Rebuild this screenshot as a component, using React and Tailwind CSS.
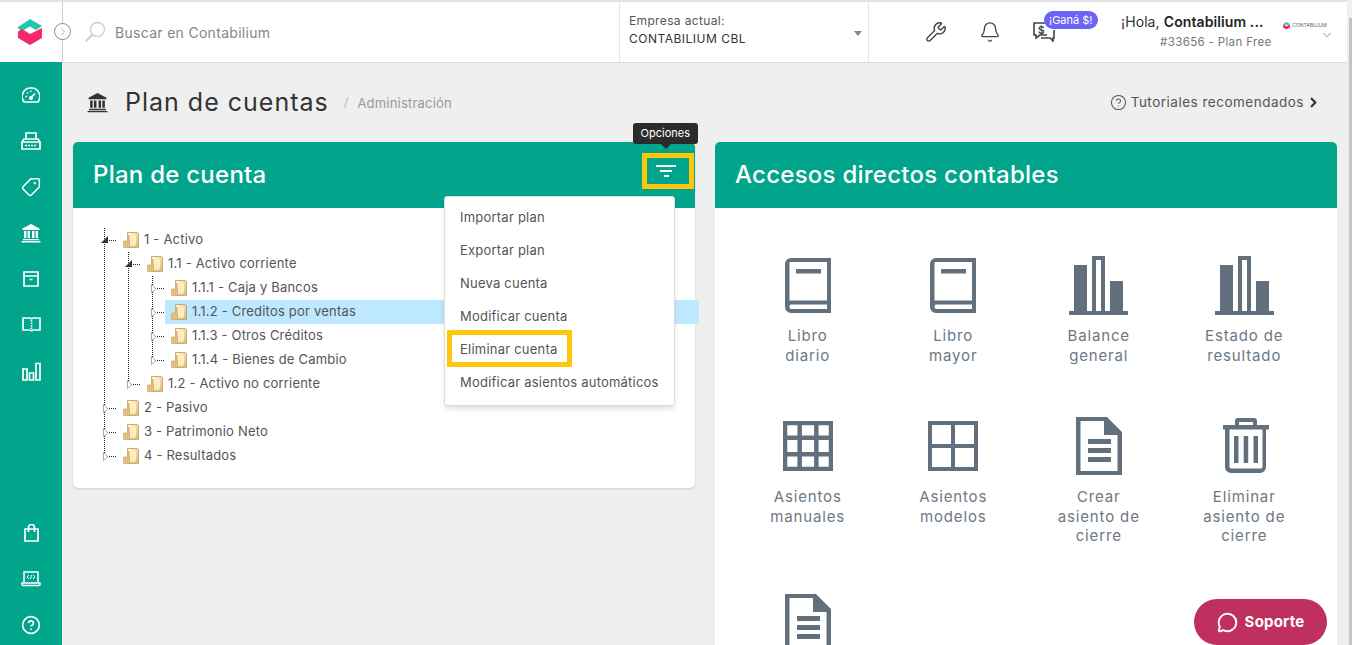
import { CircleHelp, ChevronRight, ChevronDown, Wrench, Bell, Tag, MessageCircle } from "lucide-react";

const font = { fontFamily: 'Inter, "Noto Sans", sans-serif' };

const rows = [
  { label: "1 - Activo", depth: 0, open: true, guides: [[0, "full"]] },
  { label: "1.1 - Activo corriente", depth: 1, open: true, guides: [[0, "full"], [1, "full"]] },
  { label: "1.1.1 - Caja y Bancos", depth: 2, guides: [[0, "full"], [1, "full"], [2, "full"]] },
  { label: "1.1.2 - Creditos por ventas", depth: 2, selected: true, guides: [[0, "full"], [1, "full"], [2, "full"]] },
  { label: "1.1.3 - Otros Créditos", depth: 2, guides: [[0, "full"], [1, "full"], [2, "full"]] },
  { label: "1.1.4 - Bienes de Cambio", depth: 2, guides: [[0, "full"], [1, "full"], [2, "top"]] },
  { label: "1.2 - Activo no corriente", depth: 1, guides: [[0, "full"], [1, "top"]] },
  { label: "2 - Pasivo", depth: 0, guides: [[0, "full"]] },
  { label: "3 - Patrimonio Neto", depth: 0, guides: [[0, "full"]] },
  { label: "4 - Resultados", depth: 0, guides: [[0, "top"]] },
];

const menuItems = ["Importar plan", "Exportar plan", "Nueva cuenta", "Modificar cuenta", "Eliminar cuenta", "Modificar asientos automáticos"];

function Logo({ size = 24 }) {
  return (
    <svg width={size} height={size * 1.08} viewBox="0 0 24 26">
      <path d="M0 8 12 0l12 7-6 4-6-3.500L4 12 0 9.500z" fill="#1fc9a9" />
      <path d="M0 12.500 4 10l8 5 12-6v10l-12 7-12-7z" fill="#f5286e" />
    </svg>
  );
}

function Folder() {
  return (
    <svg width="16" height="16" viewBox="0 0 16 16" className="shrink-0">
      <defs>
        <linearGradient id="folderFill" x1="0" y1="0" x2="1" y2="1">
          <stop offset="0" stopColor="#fff8dc" />
          <stop offset="1" stopColor="#e0b86f" />
        </linearGradient>
      </defs>
      <path d="M4.500.5h9.500l1.500 1v14H4.500z" fill="url(#folderFill)" stroke="#c29a58" strokeWidth="0.8" />
      <path d="M7 2.500h6v11H7z" fill="#fbeec4" />
      <path d="M.5 9h6v6.500h-6z" fill="#e3c07c" stroke="#c9a566" strokeWidth="0.6" />
      <path d="M4.500 3h2v6h-2z" fill="#d9b36d" />
    </svg>
  );
}

function Connector({ depth, open, guides }) {
  const w = 25 + depth * 24;
  const x = 12 + depth * 24;
  return (
    <svg width={w} height="24" className="shrink-0 block">
      {guides.map(([col, kind]) => (
        <line key={col} x1={12.5 + col * 24} x2={12.5 + col * 24} y1="0" y2={kind === "full" ? 24 : 12} stroke="#222" strokeDasharray="1 1" />
      ))}
      <line x1={x + 3} x2={w} y1="12.5" y2="12.5" stroke="#222" strokeDasharray="1 1" />
      {open ? (
        <path d={`M${x - 3} 15h7v-7z`} fill="#333" />
      ) : (
        <path d={`M${x - 0.5} 8.5l4.5 4-4.5 4z`} fill="#fff" stroke="#aaa" />
      )}
    </svg>
  );
}

function TreeRow({ row }) {
  return (
    <div className="flex h-6 items-center">
      <Connector depth={row.depth} open={row.open} guides={row.guides} />
      <div className={`flex h-6 flex-1 items-center gap-[5px] pl-[6px] text-[13px] tracking-[0.2px] text-[#555] ${row.selected ? "bg-[#bde8ff] text-[#444]" : ""}`}>
        <Folder />
        <span>{row.label}</span>
      </div>
    </div>
  );
}

const stroke = { fill: "none", stroke: "#fff", strokeWidth: 2 };

function SideIcon({ children }) {
  return (
    <div className="flex h-[46px] items-center justify-center text-white">{children}</div>
  );
}

function GaugeIcon() {
  return (
    <svg width="18" height="16" viewBox="0 0 18 16" {...stroke} strokeWidth="1.700">
      <path d="M3.500 15H2.200A8.500 8.500 0 0 1 9 1a8.500 8.500 0 0 1 6.800 14H3.500" />
      <path d="M9 10.500 13 6.500" />
      <circle cx="9" cy="11" r="1.200" fill="#fff" />
      <path d="M3.500 9.500h1.500M9 3.500V5M5.200 5.500l1 1" strokeWidth="1.300" />
    </svg>
  );
}

function Register() {
  return (
    <svg width="20" height="18" viewBox="0 0 20 18" {...stroke} strokeWidth="1.700">
      <path d="M1 10h18v7H1zM1 10l2-3h14l2 3M5 7V1h10v6" />
      <path d="M4 13.500h12" strokeDasharray="2 1" />
    </svg>
  );
}

function Bank({ color = "#fff", size = 20 }) {
  return (
    <svg width={size} height={size} viewBox="0 0 20 20" fill={color}>
      <path d="M10 1 18.500 5.500V7h-17V5.500z" />
      <path d="M3 8h2.400v7H3zM6.600 8H9v7H6.600zM11 8h2.400v7H11zM14.600 8H17v7h-2.400z" />
      <path d="M2 16h16v1.300H2zM.5 18h19v1.400H.5z" />
    </svg>
  );
}

function BoxIcon() {
  return (
    <svg width="16" height="16" viewBox="0 0 16 16" {...stroke} strokeWidth="1.700">
      <path d="M1 1h14v14H1zM1 5h14M6.500 8.500h3" />
    </svg>
  );
}

function OpenBook() {
  return (
    <svg width="19" height="16" viewBox="0 0 19 16" {...stroke} strokeWidth="1.700">
      <path d="M1 1h6.500c1 0 2 .5 2 1.500C9.500 1.500 10.500 1 11.500 1H18v12h-6.500c-1 0-2 .5-2 1.500 0-1-1-1.500-2-1.500H1z" />
      <path d="M9.500 3v10" strokeDasharray="1.500 1" />
    </svg>
  );
}

function BagIcon() {
  return (
    <svg width="15" height="18" viewBox="0 0 15 18" {...stroke} strokeWidth="1.700">
      <path d="M1 5h13v12H1zM4.500 8V3.500a3 3 0 0 1 6 0V8" />
    </svg>
  );
}

function Bars({ size = 19 }) {
  return (
    <svg width={size} height={size} viewBox="0 0 19 19" {...stroke} strokeWidth="1.700">
      <path d="M1 7h4v11H1zM7.500 11h4v7h-4zM14 1.500h4V18h-4z" />
    </svg>
  );
}

function Laptop() {
  return (
    <svg width="20" height="16" viewBox="0 0 20 16" {...stroke} strokeWidth="1.500">
      <path d="M3 11V1h14v10M1 12h18v1.500a1 1 0 0 1-1 1H2a1 1 0 0 1-1-1z" />
      <path d="M8 4 6 6l2 2M12 4l2 2-2 2M10.600 4 9.400 8" strokeWidth="1" />
    </svg>
  );
}

const g = "#626f7c";

function BookIcon() {
  return (
    <svg width="46" height="55" viewBox="0 0 46 55" fill={g}>
      <path fillRule="evenodd" d="M6 0h40v55H6a6 6 0 0 1-6-6V6a6 6 0 0 1 6-6zm-1.500 4v38.500A8 8 0 0 1 6 42.400h36V4zM6 46.500c-2 0-2 4.500 0 4.500h36v-4.500z" />
      <path d="M11 11h25v4.500H11z" />
    </svg>
  );
}

function ChartIcon() {
  return (
    <svg width="59" height="59" viewBox="0 0 59 59" fill={g}>
      <path fillRule="evenodd" d="M5 9h13v46H5zM23 0h13v55H23zm4 4v51h5V4zM41 25h13v30H41zM0 55h59v4H0z" />
    </svg>
  );
}

function GridIcon({ cells }) {
  const lines = [];
  for (let i = 1; i < cells; i++) {
    const p = (i * 50) / cells;
    lines.push(<path key={`v${i}`} d={`M${p} 0v50`} />, <path key={`h${i}`} d={`M0 ${p}h50`} />);
  }
  return (
    <svg width="50" height="50" viewBox="0 0 50 50" fill="none" stroke={g} strokeWidth={cells === 2 ? 4 : 4.500}>
      <rect x="2" y="2" width="46" height="46" />
      {lines}
    </svg>
  );
}

function DocIcon() {
  return (
    <svg width="46" height="58" viewBox="0 0 46 58" fill={g}>
      <path fillRule="evenodd" d="M0 0h31l15 15v43H0zm4.500 4v50h37V18H28V4z" />
      <path d="M32 5v9h9z" />
      <path d="M12 22h23v5H12zM12 31h23v5H12zM12 40h23v5H12z" />
    </svg>
  );
}

function TrashIcon() {
  return (
    <svg width="46" height="56" viewBox="0 0 46 56" fill={g} className="ml-[4px]">
      <path fillRule="evenodd" d="M0 7h12V3a3 3 0 0 1 3-3h16a3 3 0 0 1 3 3v4h12v4.500h-3V49a6 6 0 0 1-6 6H8a6 6 0 0 1-6-6V11.500H0zm16-3v3h14V4zM6.500 11.500V49A2 2 0 0 0 8 50.500h30a2 2 0 0 0 1.500-1.500V11.500z" />
      <path d="M11 18h4.500v27H11zM20.700 18h4.500v27h-4.500zM30.500 18H35v27h-4.500z" />
    </svg>
  );
}

const shortcuts = [
  { icon: <BookIcon />, lines: ["Libro", "diario"] },
  { icon: <BookIcon />, lines: ["Libro", "mayor"] },
  { icon: <ChartIcon />, lines: ["Balance", "general"] },
  { icon: <ChartIcon />, lines: ["Estado de", "resultado"] },
  { icon: <GridIcon cells={3} />, lines: ["Asientos", "manuales"] },
  { icon: <GridIcon cells={2} />, lines: ["Asientos", "modelos"] },
  { icon: <DocIcon />, lines: ["Crear", "asiento de", "cierre"] },
  { icon: <TrashIcon />, lines: ["Eliminar", "asiento de", "cierre"] },
  { icon: <DocIcon />, lines: [] },
];

function Shortcut({ icon, lines }) {
  return (
    <div className="flex min-h-[161px] flex-col items-center pb-[47px]">
      <div className="flex h-[60px] items-center justify-center">{icon}</div>
      <p className="mt-[11px] text-center text-[15px] leading-[19.500px] tracking-[0.85px] text-[#6b7885]">
        {lines.map((line) => (
          <span key={line} className="block whitespace-nowrap">{line}</span>
        ))}
      </p>
    </div>
  );
}

export default function App() {
  return (
    <div className="flex h-[645px] w-[1352px] overflow-hidden bg-[#efefef]" style={font}>
      <div className="flex w-[1347px] shrink-0 flex-col">
        <header className="flex h-[62px] shrink-0 items-stretch border-t-2 border-t-[#e2e2e2] bg-white">
          <div className="relative flex w-[63px] shrink-0 items-center border-r border-[#ccc] pl-[18px]">
            <Logo />
            <span className="absolute left-[54px] top-[21px] flex h-[17px] w-[17px] items-center justify-center rounded-full border border-[#888] bg-white text-[#777]">
              <ChevronRight size={12} strokeWidth={1.2} />
            </span>
          </div>
          <div className="flex w-[556px] items-center gap-[10px] pl-[21px]">
            <svg width="22" height="22" viewBox="0 0 22 22" fill="none" stroke="#d0d0d0" strokeWidth="1.500">
              <circle cx="13.500" cy="8.500" r="7" />
              <path d="M8.500 13.500 1.500 20.500" strokeWidth="2" stroke="#d8cfc4" />
            </svg>
            <span className="ml-[-1px] text-[14px] tracking-[0.3px] text-[#858585]">Buscar en Contabilium</span>
          </div>
          <div className="relative flex w-[250px] flex-col justify-center border-x border-[#e6e6e6] pb-[4px] pl-[9px]">
            <span className="text-[12px] leading-[18px] tracking-[0.35px] text-[#555]">Empresa actual:</span>
            <span className="text-[12px] leading-[18px] tracking-[0.5px] text-[#333]">CONTABILIUM CBL</span>
            <span className="absolute right-[6px] top-[29px] h-0 w-0 border-x-4 border-t-[5px] border-x-transparent border-t-[#888]"></span>
          </div>
          <div className="flex flex-1 items-center">
            <div className="flex w-[252px] items-center gap-[32px] pl-[56px] text-[#444]">
              <Wrench size={22} strokeWidth={1.5} />
              <Bell size={22} strokeWidth={1.5} />
              <div className="relative">
                <svg width="22" height="20" viewBox="0 0 22 20" fill="none" stroke="#444" strokeWidth="1.600">
                  <path d="M14 1H1v12h2v3l4-3h7" />
                  <path d="M8 16h9l3 3v-3h1V8" />
                </svg>
                <span className="absolute left-[5px] top-[2px] text-[10px] font-bold leading-3 text-[#444]">$</span>
                <span className="absolute left-[11px] top-[-11px] rounded-full bg-[#6a63f5] px-[5px] text-[11px] leading-[18px] whitespace-nowrap text-white">¡Ganá $!</span>
              </div>
            </div>
            <div className="mb-[2px] flex flex-col">
              <span className="text-[14px] leading-5 tracking-[0.1px] whitespace-nowrap text-[#333]">¡Hola, <b className="font-semibold text-[#222]">Contabilium ...</b></span>
              <span className="mr-[-8px] mt-[2px] text-right text-[11.500px] leading-4 tracking-[0.35px] text-[#777]">#33656 - Plan Free</span>
            </div>
            <div className="ml-[19px] flex w-[45px] flex-col items-center">
              <div className="flex items-center gap-[2px]">
                <Logo size={7} />
                <span className="text-[5px] leading-none text-[#666]">CONTABILIUM</span>
              </div>
              <ChevronDown size={14} strokeWidth={1.4} className="ml-[44px] mt-[-2px] text-[#777]" />
            </div>
          </div>
        </header>

        <div className="flex min-h-0 flex-1">
          <aside className="flex w-[62px] shrink-0 flex-col justify-between bg-[#00a58c] pt-[10px]">
            <div>
              <SideIcon><GaugeIcon /></SideIcon>
              <SideIcon><Register /></SideIcon>
              <SideIcon><Tag size={20} strokeWidth={1.8} className="-scale-x-100" /></SideIcon>
              <SideIcon><Bank /></SideIcon>
              <SideIcon><BoxIcon /></SideIcon>
              <SideIcon><OpenBook /></SideIcon>
              <SideIcon><Bars /></SideIcon>
            </div>
            <div className="mb-[-3px]">
              <SideIcon><BagIcon /></SideIcon>
              <SideIcon><Laptop /></SideIcon>
              <SideIcon><CircleHelp size={20} strokeWidth={2} /></SideIcon>
            </div>
          </aside>

          <main className="relative min-w-0 flex-1 border-t border-t-[#dcdcdc] px-[11px]">
            <div className="flex h-[79px] items-center justify-between pl-[14px] pr-[15px]">
              <div className="flex items-center">
                <Bank color="#333" size={21} />
                <h1 className="ml-[17px] text-[25px] font-normal tracking-[1px] text-[#333]">Plan de cuentas</h1>
                <span className="ml-[15px] text-[13px] text-[#bbb]">/</span>
                <span className="ml-[9px] mt-[3px] text-[13px] tracking-[0.2px] text-[#999]">Administración</span>
              </div>
              <div className="flex items-center gap-[4px] text-[13.500px] tracking-[0.5px] text-[#555]">
                <CircleHelp size={17} strokeWidth={1.5} />
                <span>Tutoriales recomendados</span>
                <ChevronRight size={15} strokeWidth={3.5} className="ml-[-2px] text-[#333]" />
              </div>
            </div>

            <div className="flex items-start gap-[20px]">
              <section className="relative w-[622px] shrink-0 rounded-[5px] bg-white shadow-sm">
                <div className="flex h-[66px] items-center justify-between rounded-t-[5px] bg-[#00a58c] pl-[20px] pr-[6px]">
                  <h2 className="text-[24px] font-medium tracking-[0.25px] text-white">Plan de cuenta</h2>
                </div>
                <div className="mr-[-4px] pb-[20px] pl-[19px] pt-[20px]">
                  {rows.map((row) => (
                    <TreeRow key={row.label} row={row} />
                  ))}
                </div>

                <div className="absolute right-[1px] top-[11px] flex h-[36px] w-[52px] items-center justify-center border-[5px] border-[#ffc60b]">
                  <div className="mr-[4px] flex flex-col items-center gap-[3px]">
                    <span className="h-[2px] w-[20px] bg-white"></span>
                    <span className="h-[2px] w-[12px] bg-white"></span>
                    <span className="h-[2px] w-[5px] bg-white"></span>
                  </div>
                </div>

                <div className="absolute right-[-3px] top-[-19px] z-20 rounded-[3px] bg-[#2b2b2b] px-[8px] text-[11px] leading-[21px] text-white">
                  Opciones
                  <span className="absolute left-[28px] top-[21px] h-0 w-0 border-x-[5px] border-t-[5px] border-x-transparent border-t-[#2b2b2b]"></span>
                </div>

                <ul className="absolute left-[371px] top-[54px] z-10 w-[231px] rounded-[3px] border border-[#ddd] bg-white pb-[6px] pt-[4px] shadow-md">
                  {menuItems.map((item) => (
                    <li key={item} className="relative flex h-[33px] items-center pl-[15px] text-[13px] tracking-[0.22px] whitespace-nowrap text-[#555]">
                      {item}
                      {item === "Eliminar cuenta" ? (
                        <span className="absolute left-[2px] top-[-3px] h-[37px] w-[125px] border-[5px] border-[#ffc60b]"></span>
                      ) : null}
                    </li>
                  ))}
                </ul>
              </section>

              <section className="w-[622px] shrink-0 rounded-[5px] bg-white">
                <div className="flex h-[66px] items-center rounded-t-[5px] bg-[#00a58c] pl-[20px]">
                  <h2 className="text-[24px] font-medium tracking-[0.25px] text-white">Accesos directos contables</h2>
                </div>
                <div className="grid grid-cols-4 px-[20px] pt-[47px]">
                  {shortcuts.map((s, i) => (
                    <Shortcut key={i} icon={s.icon} lines={s.lines} />
                  ))}
                </div>
              </section>
            </div>

            <button type="button" className="absolute bottom-0 right-[20px] flex h-[46px] w-[133px] items-center justify-center gap-[7px] rounded-[23px] bg-[#c0305f] text-[15px] font-bold tracking-[0.2px] text-white">
              <MessageCircle size={21} strokeWidth={2.2} />
              Soporte
            </button>
          </main>
        </div>
      </div>

      <div className="w-[5px] shrink-0 pl-[2px] pt-[18px]">
        <div className="h-full w-[3px] bg-[#c4c4c4]"></div>
      </div>
    </div>
  );
}
